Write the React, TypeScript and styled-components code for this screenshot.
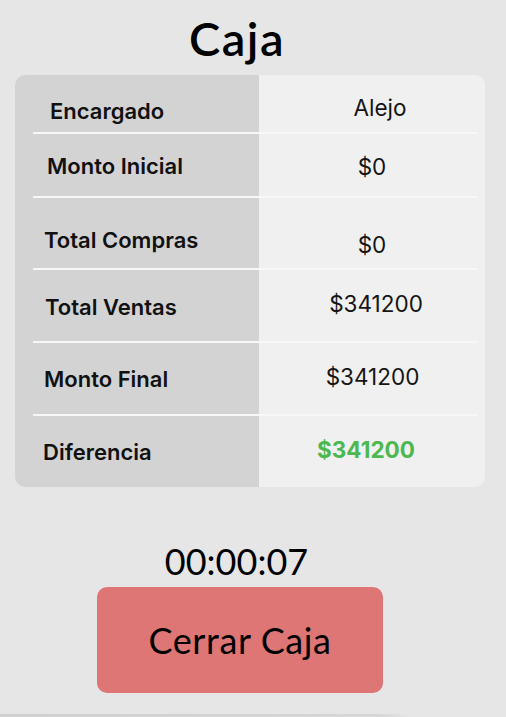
import styled, { createGlobalStyle } from "styled-components";

const GlobalStyle = createGlobalStyle`
  html, body {
    margin: 0;
    padding: 0;
    background: #e6e6e6;
  }
  body {
    font-family: Inter, "Liberation Sans", sans-serif;
  }
`;

const Page = styled.div`
  width: 506px;
  height: 717px;
  display: flex;
  flex-direction: column;
  align-items: center;
  overflow: hidden;
`;

const Title = styled.h1`
  margin: 11px 0 0 -32px;
  font-family: Lato, "Noto Sans", sans-serif;
  font-size: 47px;
  font-weight: 600;
  letter-spacing: 1.5px;
  line-height: 54px;
  color: #000;
`;

const Card = styled.div`
  margin-top: 10px;
  margin-left: -6px;
  width: 470px;
  border-radius: 10px;
  overflow: hidden;
  background: linear-gradient(to right, #d3d3d3 244px, #f0f0f0 244px);
`;

const Row = styled.div<{ $h: number; $first?: boolean }>`
  height: ${(p) => p.$h}px;
  margin: 0 7px 0 18px;
  box-sizing: border-box;
  border-top: ${(p) => (p.$first ? "none" : "2px solid #f7f7f7")};
  display: grid;
  grid-template-columns: 226px 1fr;
`;

const Label = styled.div<{ $x: number; $y: number }>`
  padding: ${(p) => p.$y - 13}px 0 0 ${(p) => p.$x}px;
  font-size: 22px;
  line-height: 26px;
  font-weight: 600;
  color: #111;
`;

const Value = styled.div<{ $x: number; $y: number; $green?: boolean }>`
  padding: ${(p) => p.$y - 13}px 0 0 ${(p) => Math.max(p.$x, 0)}px;
  padding-right: ${(p) => Math.max(-p.$x, 0)}px;
  text-align: center;
  font-size: 22.5px;
  line-height: 26px;
  font-weight: ${(p) => (p.$green ? 700 : 400)};
  color: ${(p) => (p.$green ? "#4cb84f" : "#151515")};
`;

const Timer = styled.div`
  margin-top: 52px;
  margin-left: -33px;
  font-family: Lato, "Noto Sans", sans-serif;
  font-size: 36px;
  line-height: 44px;
  color: #000;
`;

const CloseButton = styled.button`
  margin-top: 4px;
  margin-left: -26px;
  width: 286px;
  height: 106px;
  border: none;
  border-radius: 10px;
  background: #df7676;
  font-family: Lato, "Noto Sans", sans-serif;
  font-size: 36px;
  letter-spacing: 0.6px;
  color: #000;
  cursor: pointer;
`;

const BottomShade = styled.div`
  margin-top: auto;
  align-self: stretch;
  height: 3px;
  background: linear-gradient(to right, #cfcfcf 0, #d6d6d6 380px, #e6e6e6 410px);
`;

const rows = [
  { label: "Encargado", value: "Alejo", h: 57, lx: 17, ly: 36, vx: 23, vy: 33 },
  { label: "Monto Inicial", value: "$0", h: 64, lx: 14, ly: 34, vx: 7, vy: 35 },
  { label: "Total Compras", value: "$0", h: 72, lx: 11, ly: 44, vx: 7, vy: 49 },
  { label: "Total Ventas", value: "$341200", h: 73, lx: 12, ly: 39, vx: 15, vy: 36 },
  { label: "Monto Final", value: "$341200", h: 73, lx: 11, ly: 38, vx: 8, vy: 36 },
  { label: "Diferencia", value: "$341200", h: 73, lx: 10, ly: 38, vx: -5, vy: 36, green: true },
];

export default function App() {
  return (
    <Page>
      <GlobalStyle />
      <Title>Caja</Title>
      <Card>
        {rows.map((r, i) => (
          <Row key={r.label} $h={r.h} $first={i === 0}>
            <Label $x={r.lx} $y={i === 0 ? r.ly : r.ly - 2}>
              {r.label}
            </Label>
            <Value $x={r.vx} $y={i === 0 ? r.vy : r.vy - 2} $green={r.green}>
              {r.value}
            </Value>
          </Row>
        ))}
      </Card>
      <Timer>00:00:07</Timer>
      <CloseButton>Cerrar Caja</CloseButton>
      <BottomShade />
    </Page>
  );
}
